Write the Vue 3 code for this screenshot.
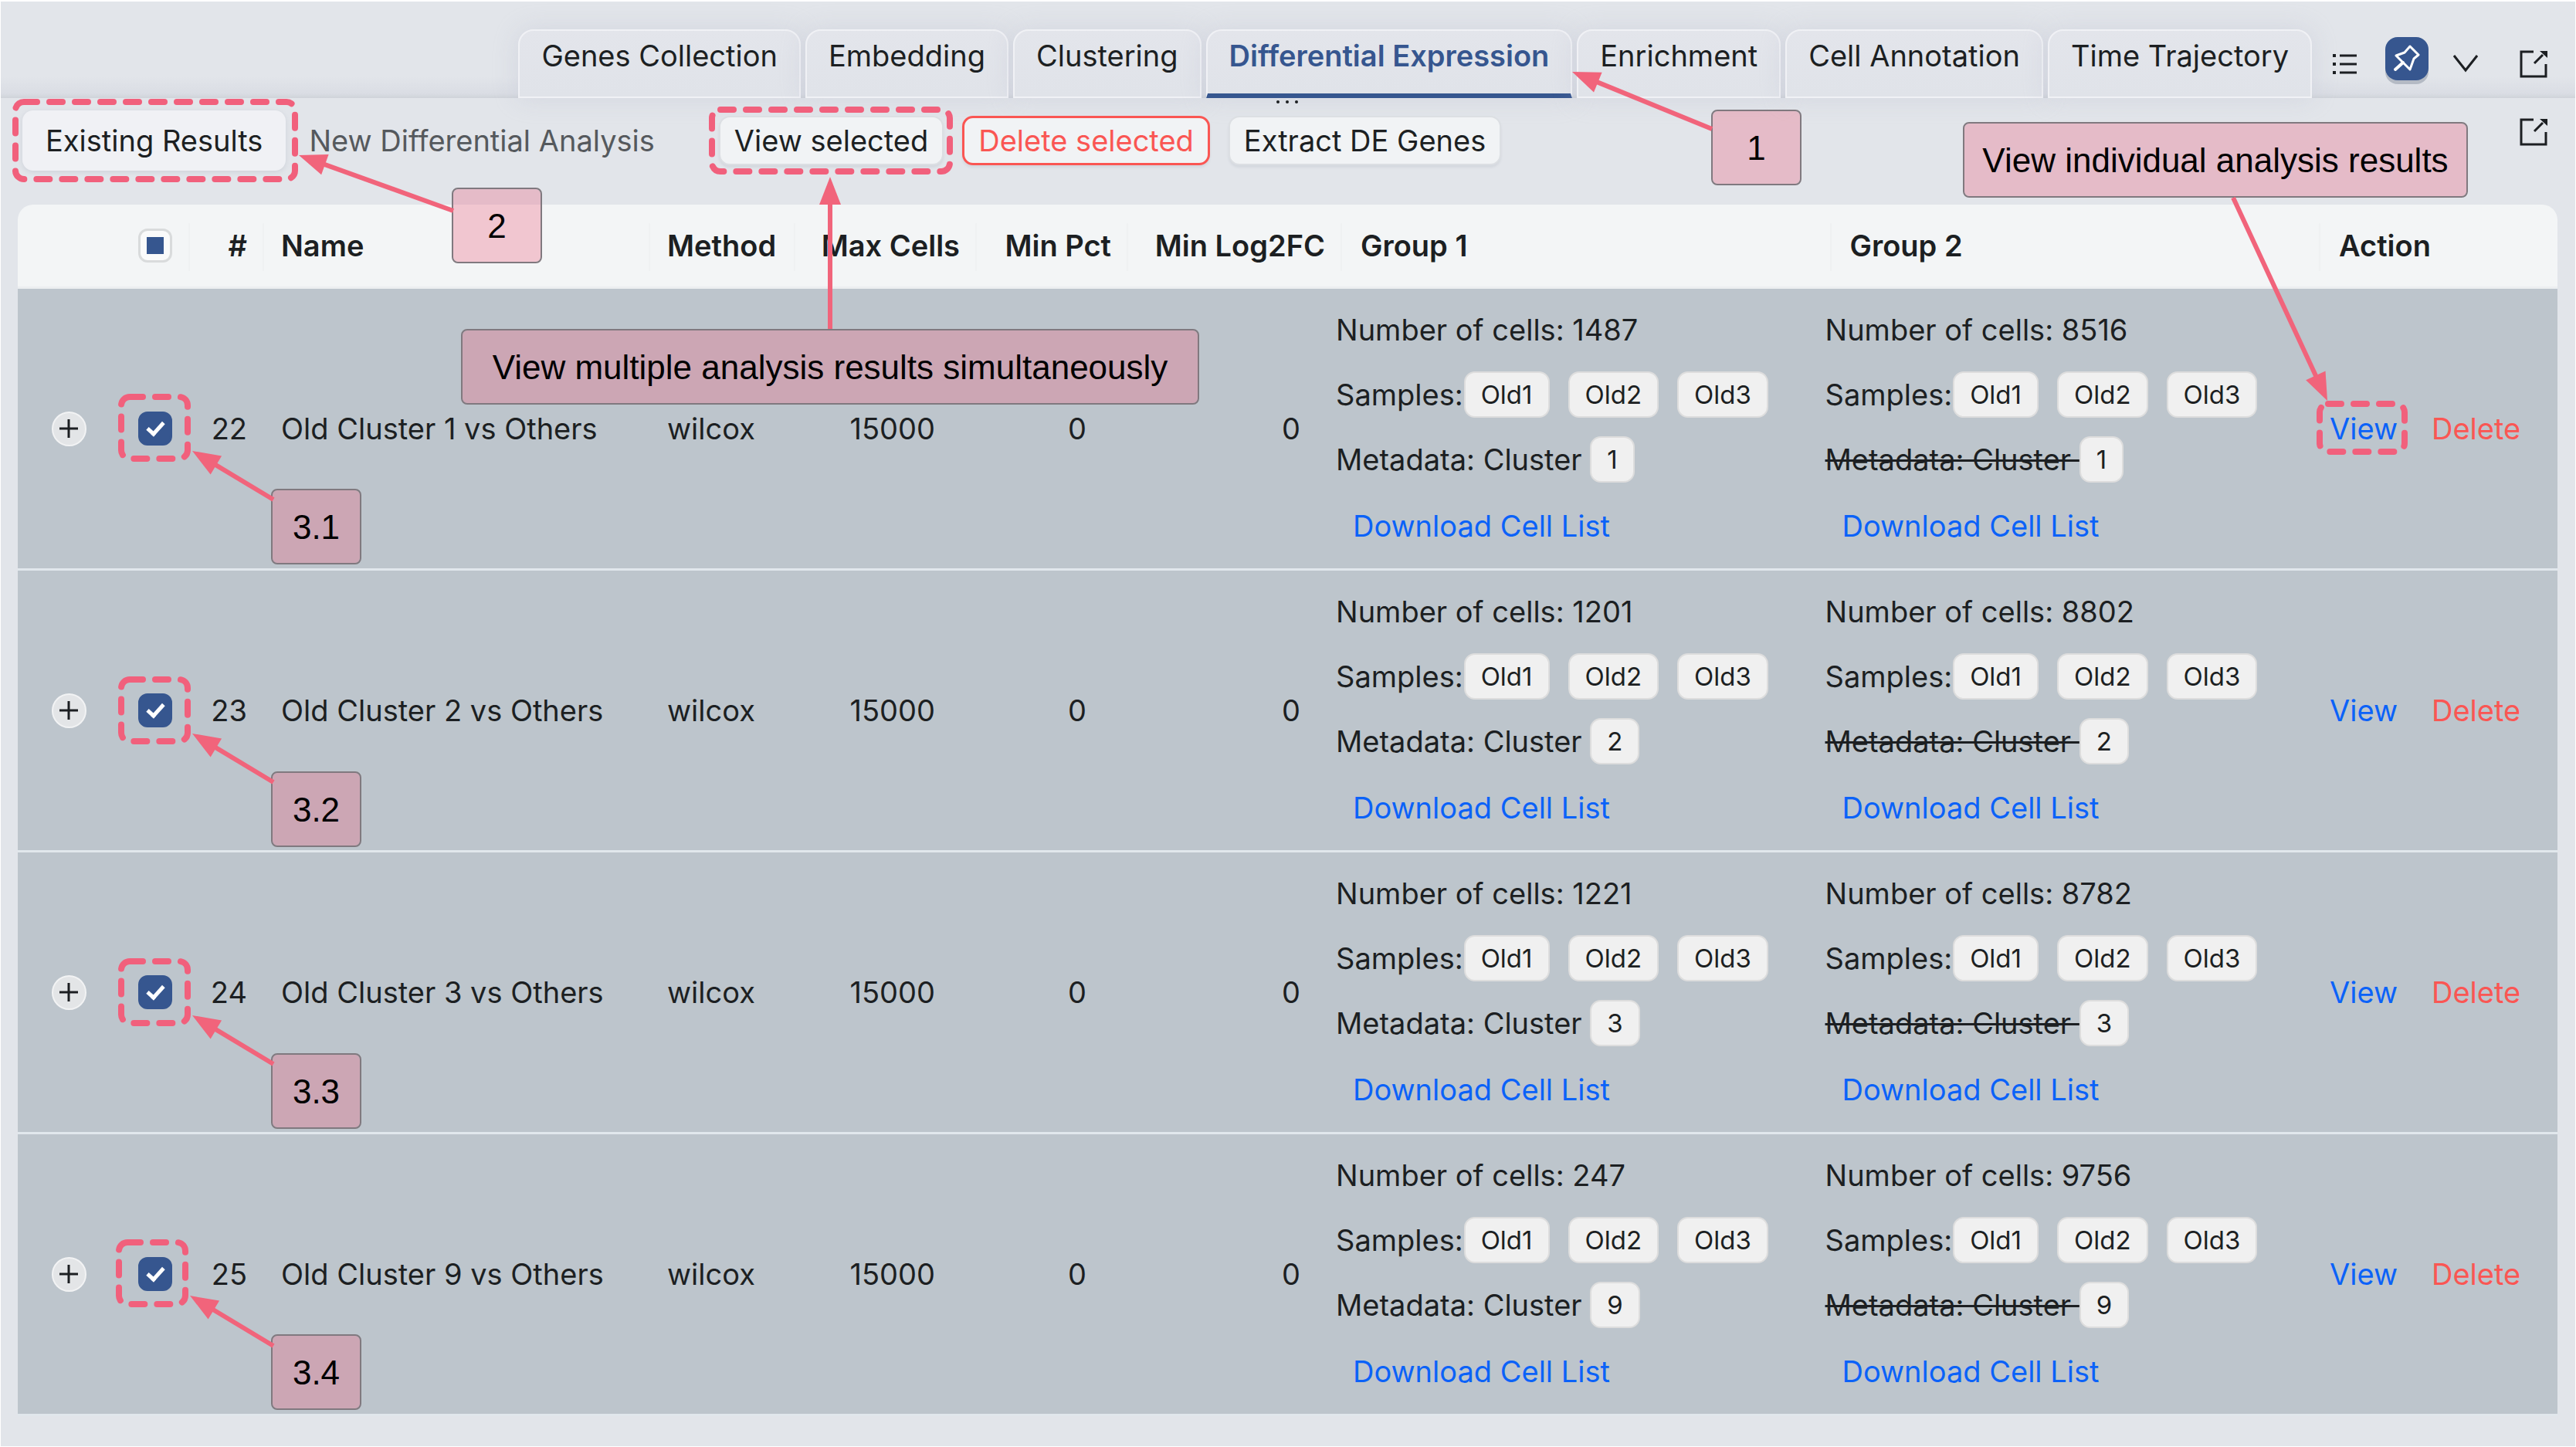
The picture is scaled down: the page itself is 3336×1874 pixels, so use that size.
<script setup>
import { ref } from 'vue'

const tabs = ['Genes Collection', 'Embedding', 'Clustering', 'Differential Expression', 'Enrichment', 'Cell Annotation', 'Time Trajectory']
const activeTab = ref('Differential Expression')

const samples = ['Old1', 'Old2', 'Old3']
const rows = ref([
  { id: 22, cluster: 1, cells: [1487, 8516], selected: true },
  { id: 23, cluster: 2, cells: [1201, 8802], selected: true },
  { id: 24, cluster: 3, cells: [1221, 8782], selected: true },
  { id: 25, cluster: 9, cells: [247, 9756], selected: true },
])

const frames = [
  { x: 20, y: 132, w: 362, h: 100 },
  { x: 922, y: 142, w: 308, h: 80 },
  { x: 3004, y: 523, w: 110, h: 62 },
  { x: 157, y: 514, w: 86, h: 80 },
  { x: 157, y: 880, w: 86, h: 80 },
  { x: 157, y: 1245, w: 86, h: 80 },
  { x: 154, y: 1609, w: 86, h: 80 },
]

const arrows = [
  { from: [2217, 167], to: [2036, 93] },
  { from: [587, 273], to: [387, 201] },
  { from: [2892, 256], to: [3014, 519] },
  { from: [1075, 426], to: [1075, 229] },
  { from: [354, 647], to: [249, 584] },
  { from: [354, 1013], to: [249, 950] },
  { from: [354, 1378], to: [249, 1315] },
  { from: [354, 1743], to: [246, 1678] },
]

const notes = [
  { text: '1', x: 2216, y: 142, w: 117 },
  { text: '2', x: 585, y: 243, w: 117 },
  { text: 'View individual analysis results', x: 2542, y: 158, w: 654 },
  { text: 'View multiple analysis results simultaneously', x: 597, y: 426, w: 956 },
  { text: '3.1', x: 351, y: 633, w: 117 },
  { text: '3.2', x: 351, y: 999, w: 117 },
  { text: '3.3', x: 351, y: 1364, w: 117 },
  { text: '3.4', x: 351, y: 1728, w: 117 },
]

// Point where the shaft meets the base of the arrow head
function shaftEnd(a) {
  const dx = a.to[0] - a.from[0]
  const dy = a.to[1] - a.from[1]
  const k = 1 - 30 / Math.hypot(dx, dy)
  return [a.from[0] + dx * k, a.from[1] + dy * k]
}

function headPoints(a) {
  const dx = a.to[0] - a.from[0]
  const dy = a.to[1] - a.from[1]
  const len = Math.hypot(dx, dy)
  const ux = dx / len
  const uy = dy / len
  const bx = a.to[0] - ux * 36
  const by = a.to[1] - uy * 36
  return `${a.to[0]},${a.to[1]} ${bx - uy * 14},${by + ux * 14} ${bx + uy * 14},${by - ux * 14}`
}
</script>

<template>
  <div class="page">
    <header class="topbar">
      <nav class="tabs">
        <button
          v-for="t in tabs"
          :key="t"
          type="button"
          class="tab"
          :class="{ active: t === activeTab }"
          @click="activeTab = t"
        >{{ t }}</button>
      </nav>
      <div class="tools">
        <button type="button" class="icon-btn list" aria-label="List">
          <svg width="32" height="28" viewBox="0 0 32 28" fill="none" stroke="#1c1f22" stroke-width="4">
            <path d="M9 3H31M9 14H31M9 25H31" stroke-width="3" />
            <path d="M0 3H4M0 14H4M0 25H4" />
          </svg>
        </button>
        <button type="button" class="icon-btn pin" aria-label="Pin">
          <svg width="36" height="36" viewBox="0 0 36 36" fill="none" stroke="#fff" stroke-width="3" stroke-linejoin="round" stroke-linecap="round">
            <path d="M22 2L33 13L27 18L22 32L4 14L15 10Z" />
            <path d="M13 23L3 32" stroke-width="4" />
          </svg>
        </button>
        <button type="button" class="icon-btn chevron" aria-label="Expand">
          <svg width="32" height="24" viewBox="0 0 32 24" fill="none" stroke="#1c1f22" stroke-width="3">
            <path d="M1 1L16 20L31 1" />
          </svg>
        </button>
        <button type="button" class="icon-btn" aria-label="Open in new window">
          <svg width="36" height="36" viewBox="0 0 36 36" fill="none" stroke="#1c1f22" stroke-width="3">
            <path d="M18 2H2V34H34V18" />
            <path d="M19 17L30 6" />
            <path d="M26 1H36V10Z" fill="#1c1f22" stroke="none" />
          </svg>
        </button>
      </div>
    </header>

    <section class="toolbar">
      <button type="button" class="seg current">Existing Results</button>
      <button type="button" class="seg">New Differential Analysis</button>
      <div class="actions">
        <button type="button" class="btn">View selected</button>
        <button type="button" class="btn danger">Delete selected</button>
        <button type="button" class="btn">Extract DE Genes</button>
      </div>
      <button type="button" class="icon-btn export" aria-label="Open results in new window">
        <svg width="36" height="36" viewBox="0 0 36 36" fill="none" stroke="#1c1f22" stroke-width="3">
          <path d="M18 2H2V34H34V18" />
          <path d="M19 17L30 6" />
          <path d="M26 1H36V10Z" fill="#1c1f22" stroke="none" />
        </svg>
      </button>
      <svg class="grip" width="30" height="6" viewBox="0 0 30 6" fill="#1c1f22">
        <circle cx="3" cy="3" r="2" /><circle cx="15" cy="3" r="2" /><circle cx="27" cy="3" r="2" />
      </svg>
    </section>

    <main class="content">
      <table class="results">
        <colgroup>
          <col class="c-expand" /><col class="c-check" /><col class="c-id" /><col class="c-name" />
          <col class="c-method" /><col class="c-max" /><col class="c-pct" /><col class="c-log" />
          <col /><col /><col class="c-action" />
        </colgroup>
        <thead>
          <tr>
            <th class="bare"></th>
            <th class="center"><input type="checkbox" class="check" aria-label="Select all" :indeterminate="true" /></th>
            <th class="num">#</th>
            <th>Name</th>
            <th>Method</th>
            <th class="num">Max Cells</th>
            <th class="num">Min Pct</th>
            <th class="num">Min Log2FC</th>
            <th class="wide">Group 1</th>
            <th class="wide">Group 2</th>
            <th class="bare wide">Action</th>
          </tr>
        </thead>
        <tbody>
          <tr v-for="row in rows" :key="row.id">
            <td class="center">
              <button type="button" class="expand" aria-label="Expand row">
                <svg width="26" height="26" viewBox="0 0 26 26" stroke="#1c1f22" stroke-width="3"><path d="M13 1V25M1 13H25" /></svg>
              </button>
            </td>
            <td class="center"><input v-model="row.selected" type="checkbox" class="check" :aria-label="`Select ${row.id}`" /></td>
            <td class="num">{{ row.id }}</td>
            <td>Old Cluster {{ row.cluster }} vs Others</td>
            <td>wilcox</td>
            <td class="num value">15000</td>
            <td class="num value">0</td>
            <td class="num value">0</td>
            <td v-for="(count, g) in row.cells" :key="g" class="group">
              <div class="line">Number of cells: {{ count }}</div>
              <div class="line samples">
                <span>Samples:</span>
                <span v-for="s in samples" :key="s" class="tag">{{ s }}</span>
              </div>
              <div class="line">
                <span class="meta" :class="{ excluded: g === 1 }">Metadata: Cluster </span>
                <span class="tag">{{ row.cluster }}</span>
              </div>
              <div class="line download"><button type="button" class="link">Download Cell List</button></div>
            </td>
            <td class="row-actions">
              <button type="button" class="link">View</button>
              <button type="button" class="link remove">Delete</button>
            </td>
          </tr>
        </tbody>
      </table>
    </main>

    <div class="guide">
      <div
        v-for="n in notes"
        :key="n.text"
        class="note"
        :style="{ left: n.x + 'px', top: n.y + 'px', width: n.w + 'px' }"
      >{{ n.text }}</div>
      <svg class="marks" width="100%" height="100%">
        <rect v-for="(f, i) in frames" :key="'f' + i" class="frame" :x="f.x" :y="f.y" :width="f.w" :height="f.h" rx="11" />
        <g v-for="(a, i) in arrows" :key="'a' + i">
          <line class="shaft" :x1="a.from[0]" :y1="a.from[1]" :x2="shaftEnd(a)[0]" :y2="shaftEnd(a)[1]" />
          <polygon class="head" :points="headPoints(a)" />
        </g>
      </svg>
    </div>
  </div>
</template>

<style>
body {
  margin: 0;
  background: #e2e5ea;
}
</style>

<style scoped>
.page {
  position: relative;
  box-sizing: border-box;
  min-height: 100vh;
  padding-bottom: 40px;
  background: #e2e5ea;
  box-shadow: inset 0 2px 0 #fff, inset 0 0 0 1px #fff;
  color: #1c1f22;
  font-family: Inter, "Liberation Sans", sans-serif;
  font-size: 38px;
  line-height: 48px;
}

button {
  font: inherit;
  color: inherit;
  margin: 0;
  padding: 0;
  border: 0;
  background: none;
  white-space: nowrap;
  cursor: pointer;
}

.topbar {
  display: flex;
  justify-content: flex-end;
  align-items: flex-end;
  margin: 0 1px;
  padding: 38px 36px 0 0;
  background: linear-gradient(to top, #cfd3d9 0, #dadde4 6px, #e2e5ea 28px, rgba(226, 229, 234, 0) 40px);
}

.tabs {
  display: flex;
  gap: 6px;
}

.tab {
  box-sizing: border-box;
  height: 89px;
  padding: 8px 28px 30px;
  border: 2px solid #f0f1f5;
  border-radius: 20px 20px 0 0;
  background: linear-gradient(#e3e5eb, #e0e3e9);
  box-shadow: 0 0 32px rgba(174, 178, 200, 0.3);
}

.tab.active {
  padding-bottom: 26px;
  border-bottom: 6px solid #36568f;
  color: #36568f;
  font-weight: 600;
}

.tools {
  display: flex;
  align-items: center;
  height: 89px;
  padding-left: 27px;
}

.icon-btn {
  display: flex;
  align-items: center;
  justify-content: center;
}

.pin {
  width: 56px;
  height: 56px;
  margin: 0 32px 14px 36px;
  border-radius: 16px;
  background: #36568f;
  box-shadow: 0 5px 0 #b4bac4;
}

.chevron {
  margin-right: 54px;
}

.toolbar {
  position: relative;
  display: flex;
  align-items: center;
  padding: 16px 37px 44px 29px;
}

.grip {
  position: absolute;
  left: 1652px;
  top: 2px;
}

.seg {
  height: 78px;
  padding: 0 30px;
  border-radius: 14px;
  color: #55595d;
}

.seg.current {
  background: #f0f1f5;
  box-shadow: 0 2px 6px rgba(100, 110, 130, 0.15);
  color: #1c1f22;
}

.actions {
  display: flex;
  gap: 24px;
  margin-left: 53px;
}

.btn {
  box-sizing: border-box;
  height: 64px;
  padding: 0 18px;
  border: 2px solid #dcdfe3;
  border-radius: 14px;
  background: #f1f3f5;
  box-shadow: 0 3px 3px rgba(100, 110, 130, 0.1);
}

.btn.danger {
  border: 3px solid #fa5653;
  color: #fa5653;
}

.export {
  margin: 0 0 22px auto;
}

.content {
  padding: 0 24px 0 23px;
}

.results {
  width: 100%;
  table-layout: fixed;
  border-collapse: separate;
  border-spacing: 0;
}

.c-expand { width: 134px; }
.c-check { width: 89px; }
.c-id { width: 96px; }
.c-name { width: 500px; }
.c-method { width: 188px; }
.c-max { width: 235px; }
.c-pct { width: 196px; }
.c-log { width: 277px; }
.c-action { width: 307px; }

th {
  position: relative;
  height: 106px;
  padding: 0 22px;
  border-bottom: 3px solid #eceef0;
  background: #f3f5f6;
  font-weight: 600;
  text-align: left;
  white-space: nowrap;
}

th.wide {
  padding-left: 24px;
}

th:not(.bare)::after {
  content: "";
  position: absolute;
  right: 0;
  top: 24px;
  width: 2px;
  height: 62px;
  background: #eff1f2;
}

th:first-child { border-top-left-radius: 20px; }
th:last-child { border-top-right-radius: 20px; }

td {
  padding: 0 22px;
  border-bottom: 3px solid #e1e7ec;
  background: #bdc5cc;
  white-space: nowrap;
}

th.num,
td.num {
  text-align: right;
}

td.value {
  padding-right: 54px;
}

th.center,
td.center {
  padding: 0 2px 0 0;
}

td.group {
  padding: 11px 0;
}

.line {
  display: flex;
  align-items: center;
  height: 84px;
  margin-left: -8px;
}

.line.download {
  height: 88px;
  padding-left: 22px;
}

.samples {
  gap: 24px;
}

.samples > .tag:nth-child(2) {
  margin-left: -23px;
}

.meta {
  white-space: pre;
}

.excluded {
  text-decoration: line-through;
  text-decoration-thickness: 3px;
}

.tag {
  box-sizing: border-box;
  height: 60px;
  padding: 0 20px;
  border: 2px solid #dddddd;
  border-radius: 14px;
  background: #f0f0f0;
  font-size: 33px;
  line-height: 56px;
}

.link {
  color: #0b62f8;
}

.link.remove {
  margin-left: 44px;
  color: #fa5653;
}

td.row-actions {
  padding: 0 0 0 12px;
}

.expand {
  display: flex;
  align-items: center;
  justify-content: center;
  box-sizing: border-box;
  width: 45px;
  height: 45px;
  margin: 0 auto;
  border: 2px solid #f2f3f4;
  border-radius: 50%;
  background: #e3e5e7;
}

.check {
  appearance: none;
  display: block;
  position: relative;
  box-sizing: border-box;
  width: 44px;
  height: 44px;
  margin: 0 auto;
  border: 3px solid #d9dbdc;
  border-radius: 12px;
  background: #fafafa;
}

.check:checked {
  border-color: #36568f;
  background: #36568f;
}

.check:indeterminate::after {
  content: "";
  position: absolute;
  left: 8px;
  top: 8px;
  width: 22px;
  height: 22px;
  background: #36568f;
}

.check:checked::after {
  content: "";
  position: absolute;
  left: 13px;
  top: 6px;
  width: 8px;
  height: 17px;
  border: solid #fff;
  border-width: 0 5px 5px 0;
  transform: rotate(42deg);
}

.guide {
  position: absolute;
  inset: 0;
  pointer-events: none;
}

.marks {
  position: absolute;
  left: 0;
  top: 0;
  overflow: visible;
}

.frame {
  fill: none;
  stroke: #f1607c;
  stroke-width: 8px;
  stroke-linecap: round;
  stroke-dasharray: 17 16;
}

.shaft {
  stroke: #f1647b;
  stroke-width: 6px;
}

.head {
  fill: #f1647b;
}

.note {
  position: absolute;
  display: flex;
  align-items: center;
  justify-content: center;
  box-sizing: border-box;
  height: 98px;
  padding-top: 2px;
  border: 2px solid #80797f;
  border-radius: 8px;
  background: rgba(238, 102, 131, 0.33);
  background-clip: padding-box;
  color: #000;
  font-family: "Liberation Sans", Arial, sans-serif;
  font-size: 44px;
  white-space: nowrap;
}
</style>
